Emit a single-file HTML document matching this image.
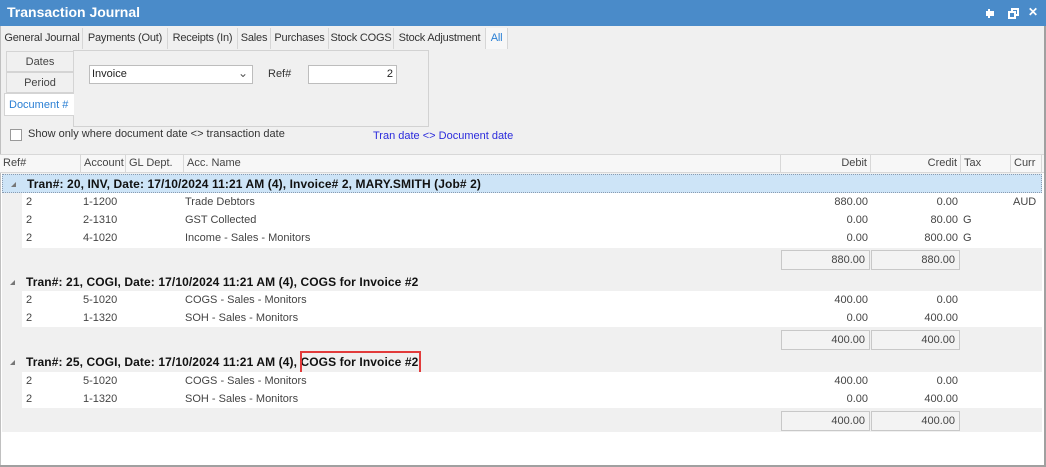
<!DOCTYPE html>
<html><head><style>
*{margin:0;padding:0;box-sizing:border-box}
body{width:1046px;height:467px;background:#fff;font-family:"Liberation Sans",sans-serif;font-size:11px;color:#222;position:relative;overflow:hidden}
.a{position:absolute;white-space:nowrap}
.tab{position:absolute;top:28px;height:21px;line-height:20px;border-right:1px solid #d6d6d6;color:#333;font-size:11px;letter-spacing:-0.2px;text-align:center;overflow:hidden;white-space:nowrap}
.hd{position:absolute;top:155px;height:18px;line-height:17px;border-right:1px solid #d8d8d8;padding:0 3px;color:#444}
.g{position:absolute;left:2px;width:1040px;height:19px;line-height:19px;font-weight:bold;font-size:12px;letter-spacing:0.1px;color:#111;padding-left:24px;white-space:nowrap}
.g:before{content:"";position:absolute;left:8px;top:7px;border-left:5px solid transparent;border-bottom:5px solid #777}
.r{position:absolute;left:22px;width:1020px;height:18px;line-height:18px;background:#fff;color:#444}
.r span{position:absolute}
.sum{position:absolute;left:2px;width:1040px;height:23px;background:#f0f0f0}
.box{position:absolute;top:2px;height:20px;line-height:19px;border:1px solid #c8c8c8;background:#f3f3f3;text-align:right;padding-right:4px;color:#444}
</style></head><body>
<div class="a" style="left:0;top:0;width:1046px;height:26px;background:#4a8bc9;color:#fff;font-weight:bold;font-size:14px;line-height:25px;padding-left:7px">Transaction Journal</div>
<div class="a" style="right:52px;top:11px;width:8px;height:5px;background:#fff"></div>
<div class="a" style="right:56px;top:9px;width:2px;height:9px;background:#fff"></div>
<div class="a" style="right:27px;top:8px;width:8px;height:8px;border:2px solid #fff"></div>
<div class="a" style="right:30px;top:11px;width:8px;height:8px;border:2px solid #fff;background:#4a8bc9"></div>
<div class="a" style="right:8px;top:5px;color:#fff;font-weight:bold;font-size:12px">✕</div>
<div class="a" style="left:0;top:26px;width:1046px;height:128px;background:#f0f0f0"></div>
<div class="a" style="right:0;top:26px;width:2px;height:441px;background:#a0a0a0"></div>
<div class="a" style="left:0;top:26px;width:1px;height:441px;background:#c0c0c0"></div>
<div class="a" style="left:0;top:465px;width:1046px;height:2px;background:#a0a0a0"></div>
<div class="tab" style="left:2px;width:81px">General Journal</div>
<div class="tab" style="left:83px;width:85px">Payments (Out)</div>
<div class="tab" style="left:168px;width:70px">Receipts (In)</div>
<div class="tab" style="left:238px;width:33px">Sales</div>
<div class="tab" style="left:271px;width:58px">Purchases</div>
<div class="tab" style="left:329px;width:65px">Stock COGS</div>
<div class="tab" style="left:394px;width:92px">Stock Adjustment</div>
<div class="tab" style="left:486px;width:22px;color:#2a7fd4;background:#f7f7f7">All</div>
<div class="a" style="left:73px;top:50px;width:356px;height:77px;border:1px solid #d2d2d2;background:#f0f0f0"></div>
<div class="a" style="left:6px;top:51px;width:68px;height:21px;border:1px solid #d4d4d4;text-align:center;line-height:20px;color:#444">Dates</div>
<div class="a" style="left:6px;top:72px;width:68px;height:21px;border:1px solid #d4d4d4;text-align:center;line-height:20px;color:#444">Period</div>
<div class="a" style="left:4px;top:93px;width:70px;height:23px;border:1px solid #d4d4d4;border-right:none;background:#fff;line-height:22px;padding-left:4px;color:#2a7fd4">Document #</div>
<div class="a" style="left:89px;top:65px;width:164px;height:19px;border:1px solid #bdbdbd;background:#fff;line-height:17px;padding-left:2px;color:#222">Invoice</div>
<div class="a" style="left:238px;top:66px;color:#555;font-size:12px">⌄</div>
<div class="a" style="left:268px;top:68px;color:#333">Ref#</div>
<div class="a" style="left:308px;top:65px;width:89px;height:19px;border:1px solid #bdbdbd;background:#fff;line-height:17px;text-align:right;padding-right:3px">2</div>
<div class="a" style="left:10px;top:129px;width:12px;height:12px;border:1px solid #999;background:#fff"></div>
<div class="a" style="left:28px;top:128px;color:#333">Show only where document date &lt;&gt; transaction date</div>
<div class="a" style="left:373px;top:130px;color:#2b2bdc">Tran date &lt;&gt; Document date</div>
<div class="a" style="left:0;top:154px;width:1044px;height:19px;background:#f7f7f7;border-top:1px solid #d8d8d8;border-bottom:1px solid #d8d8d8"></div>
<div class="hd" style="left:0;width:81px">Ref#</div>
<div class="hd" style="left:81px;width:45px">Account</div>
<div class="hd" style="left:126px;width:58px">GL Dept.</div>
<div class="hd" style="left:184px;width:597px">Acc. Name</div>
<div class="hd" style="left:781px;width:90px;text-align:right">Debit</div>
<div class="hd" style="left:871px;width:90px;text-align:right">Credit</div>
<div class="hd" style="left:961px;width:50px">Tax</div>
<div class="hd" style="left:1011px;width:31px">Curr</div>
<div class="a" style="left:2px;top:173px;width:1040px;height:259px;background:#f0f0f0"></div>
<div class="g" style="top:174px;background:#cde4f7;border:1px dotted #8a9bb0">Tran#: 20, INV, Date: 17/10/2024 11:21 AM (4), Invoice# 2, MARY.SMITH (Job# 2)</div>
<div class="r" style="top:193px"><span style="left:4px">2</span><span style="left:61px">1-1200</span><span style="left:163px">Trade Debtors</span><span style="right:174px">880.00</span><span style="right:84px">0.00</span><span style="left:991px">AUD</span></div>
<div class="r" style="top:211px"><span style="left:4px">2</span><span style="left:61px">2-1310</span><span style="left:163px">GST Collected</span><span style="right:174px">0.00</span><span style="right:84px">80.00</span><span style="left:941px">G</span></div>
<div class="r" style="top:229px;height:19px"><span style="left:4px">2</span><span style="left:61px">4-1020</span><span style="left:163px">Income - Sales - Monitors</span><span style="right:174px">0.00</span><span style="right:84px">800.00</span><span style="left:941px">G</span></div>
<div class="sum" style="top:248px"><div class="box" style="left:779px;width:89px">880.00</div><div class="box" style="left:869px;width:89px">880.00</div></div>
<div class="g" style="top:273px">Tran#: 21, COGI, Date: 17/10/2024 11:21 AM (4), COGS for Invoice #2</div>
<div class="r" style="top:291px"><span style="left:4px">2</span><span style="left:61px">5-1020</span><span style="left:163px">COGS - Sales - Monitors</span><span style="right:174px">400.00</span><span style="right:84px">0.00</span></div>
<div class="r" style="top:309px"><span style="left:4px">2</span><span style="left:61px">1-1320</span><span style="left:163px">SOH - Sales - Monitors</span><span style="right:174px">0.00</span><span style="right:84px">400.00</span></div>
<div class="sum" style="top:328px"><div class="box" style="left:779px;width:89px">400.00</div><div class="box" style="left:869px;width:89px">400.00</div></div>
<div class="g" style="top:353px">Tran#: 25, COGI, Date: 17/10/2024 11:21 AM (4), COGS for Invoice #2</div>
<div class="a" style="left:300px;top:351px;width:121px;height:23px;border:2px solid #e23b3b"></div>
<div class="r" style="top:372px"><span style="left:4px">2</span><span style="left:61px">5-1020</span><span style="left:163px">COGS - Sales - Monitors</span><span style="right:174px">400.00</span><span style="right:84px">0.00</span></div>
<div class="r" style="top:390px"><span style="left:4px">2</span><span style="left:61px">1-1320</span><span style="left:163px">SOH - Sales - Monitors</span><span style="right:174px">0.00</span><span style="right:84px">400.00</span></div>
<div class="sum" style="top:409px"><div class="box" style="left:779px;width:89px">400.00</div><div class="box" style="left:869px;width:89px">400.00</div></div>
</body></html>
